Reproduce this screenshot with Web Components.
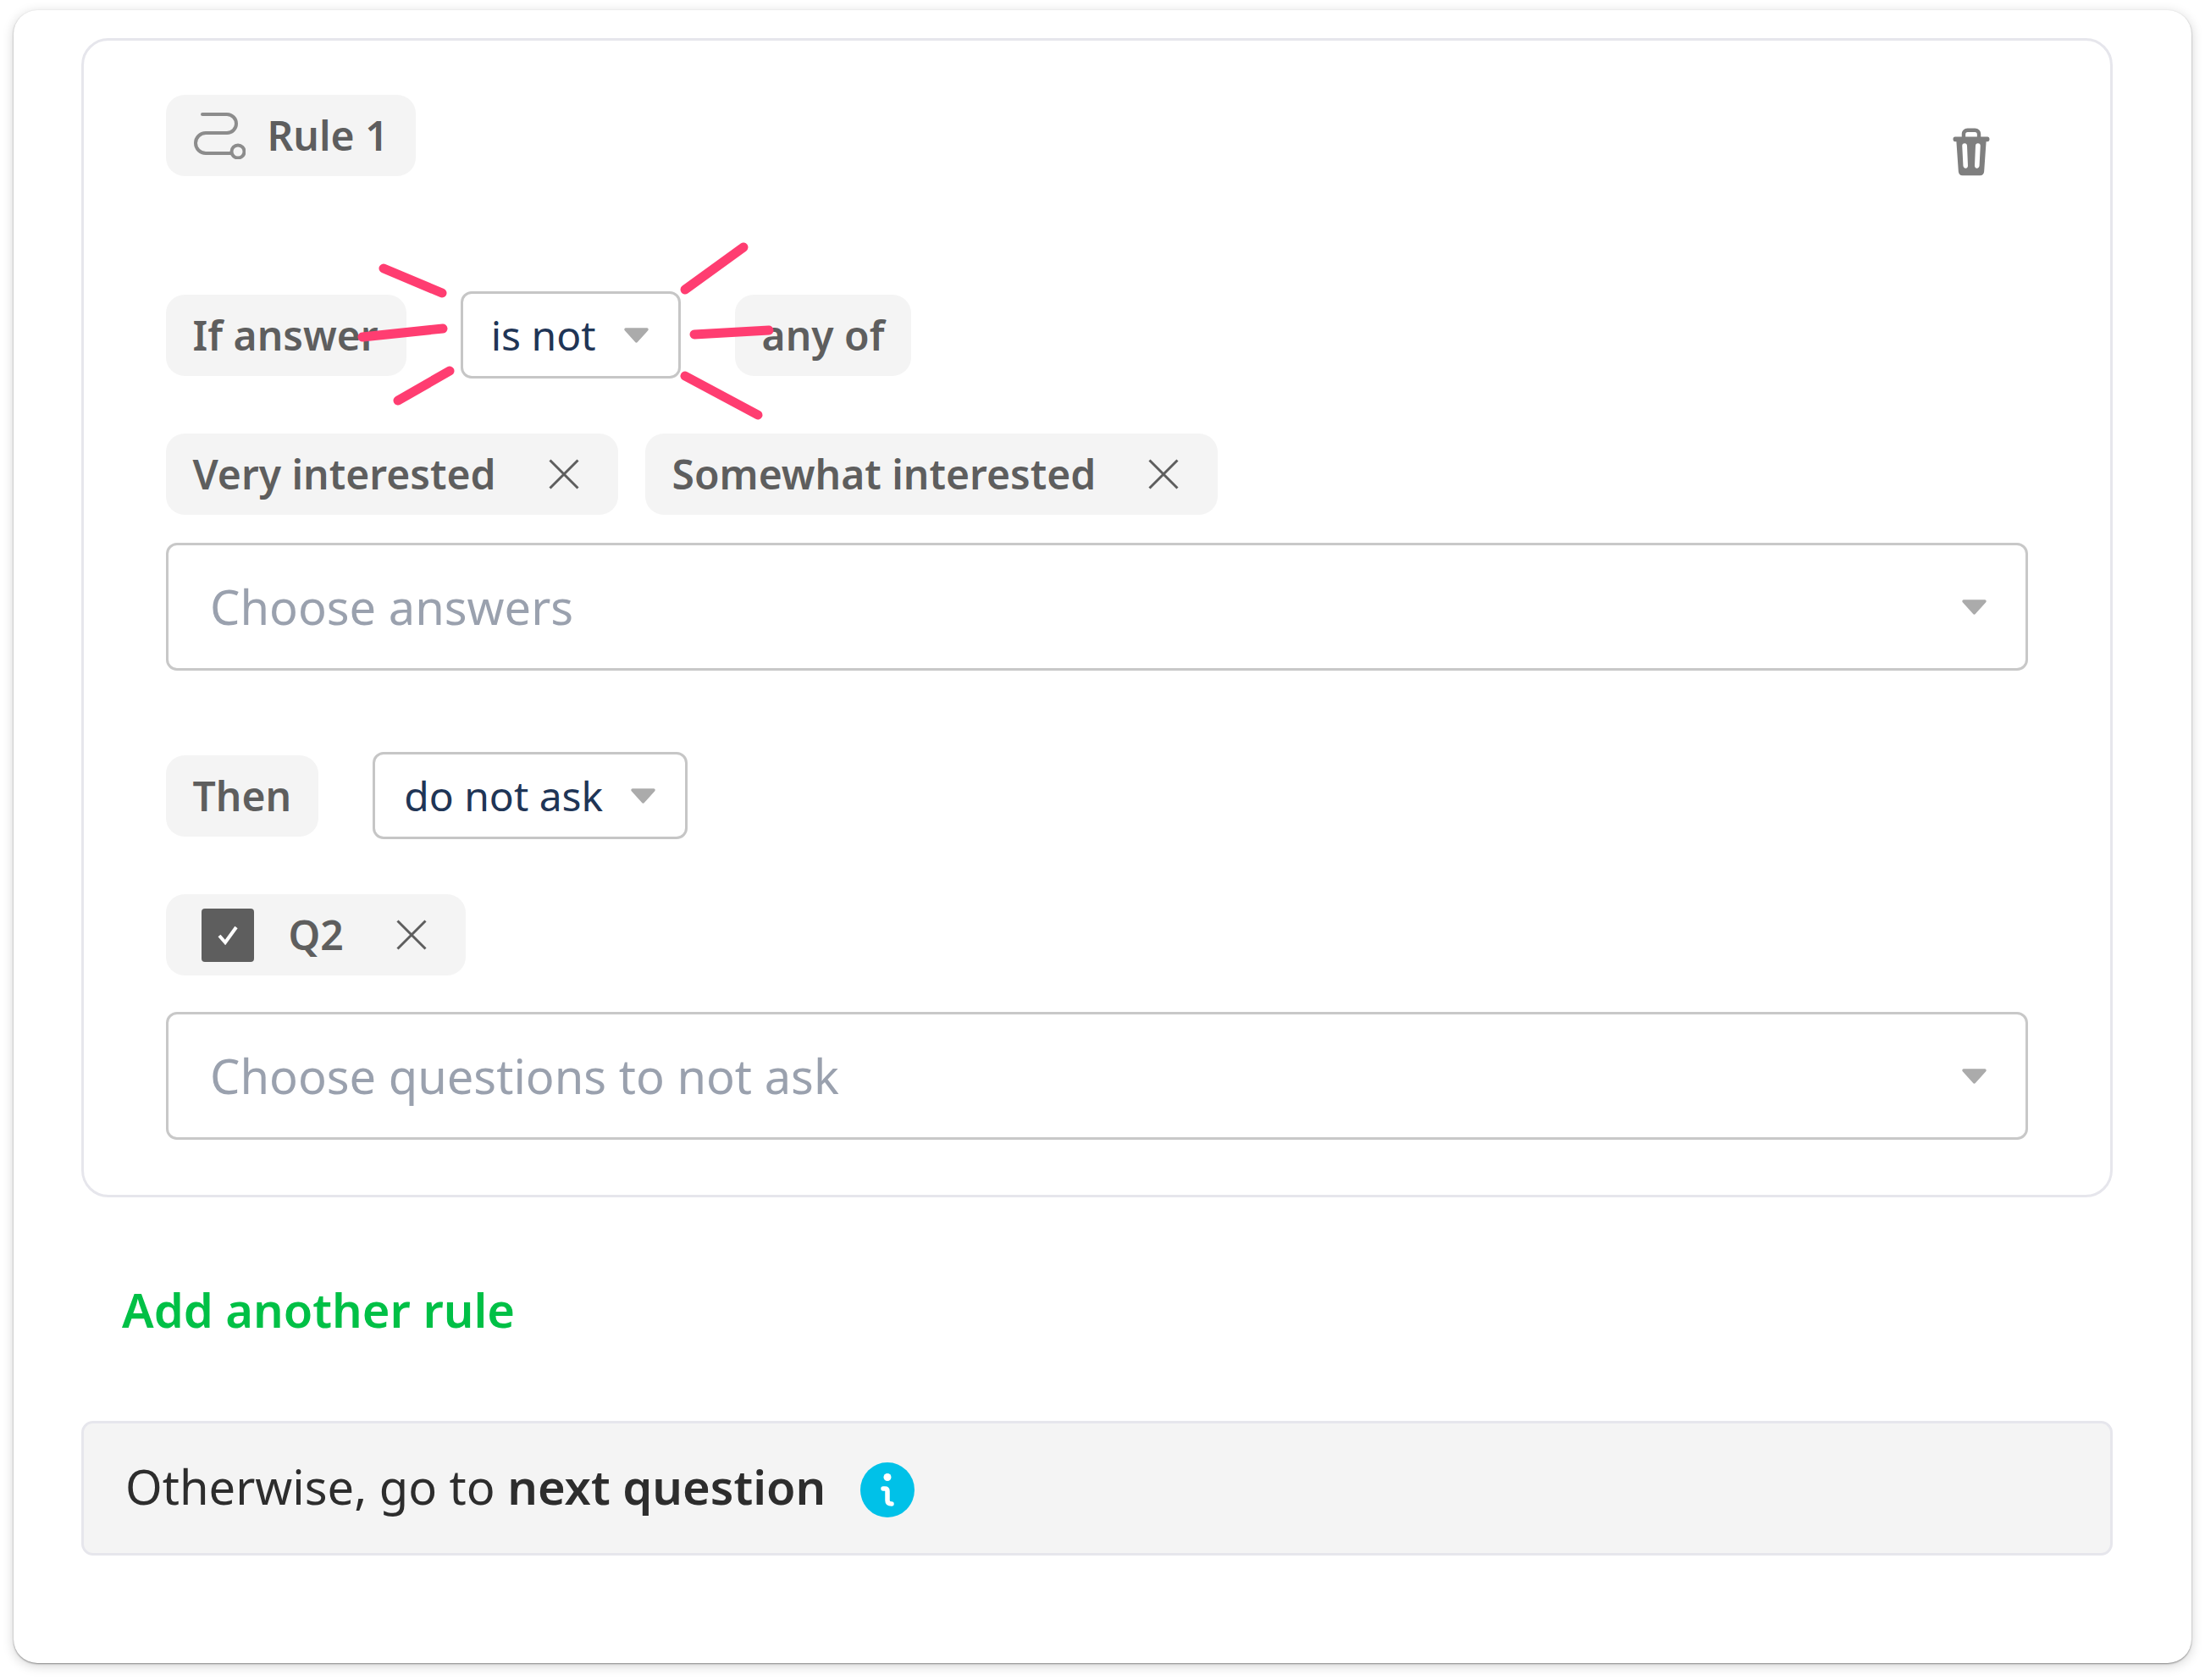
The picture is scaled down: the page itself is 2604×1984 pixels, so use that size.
<!DOCTYPE html>
<html><head><meta charset="utf-8">
<style>
html,body{margin:0;background:#fff}
body{font-family:"Noto Sans",sans-serif;width:2604px;height:1984px;overflow:hidden}
</style></head><body>
<template id="t-chip"><style>
:host{display:inline-flex;align-items:center;height:96px;box-sizing:border-box;padding:0 32px;background:#f4f4f4;border-radius:22px;color:#5e5e5e;font-weight:600;font-size:48px;line-height:1;white-space:nowrap}
.x{display:none;margin-left:62px;width:36px;height:36px}
:host([closable]){padding-right:46px}
:host([closable]) .x{display:block}
</style><slot></slot><svg class="x" viewBox="0 0 36 36"><path d="M1.5 1.5L34.5 34.5M34.5 1.5L1.5 34.5" stroke="#5e5e5e" stroke-width="3" fill="none"/></svg></template>

<template id="t-select"><style>
:host{display:inline-flex;align-items:center;height:103px;box-sizing:border-box;background:#fff;border:3.5px solid #c6c6c6;border-radius:13px;color:#1f3556;font-size:48px;line-height:1;white-space:nowrap;padding:0 var(--pr,32px) 0 var(--pl,32px)}
svg{margin-left:var(--ag,30px);width:31px;height:20px;display:block}
</style><slot></slot><svg viewBox="0 0 30 19"><path d="M3 1h24a1.800 1.800 0 0 1 1.300 3L16.500 17a2 2 0 0 1-3 0L1.700 4A1.800 1.800 0 0 1 3 1z" fill="#ababab"/></svg></template>

<template id="t-field"><style>
:host{display:flex;align-items:center;justify-content:space-between;height:151px;box-sizing:border-box;background:#fff;border:3.5px solid #c8c8c8;border-radius:13px;color:#9aa1ae;font-size:56px;line-height:1;padding:0 45px 0 49.5px}
span{position:relative;top:-1px}
svg{width:31px;height:20px;display:block}
</style><span><slot></slot></span><svg viewBox="0 0 30 19"><path d="M3 1h24a1.800 1.800 0 0 1 1.300 3L16.500 17a2 2 0 0 1-3 0L1.700 4A1.800 1.800 0 0 1 3 1z" fill="#ababab"/></svg></template>

<template id="t-shell"><style>
:host{display:block;box-sizing:border-box;width:2572px;height:1952px;margin:12px 16px 0;background:#fff;border-radius:28px;box-shadow:0 1px 2px rgba(0,0,0,.4),0 3px 14px rgba(0,0,0,.18);padding:33px 93px 0 80px}
</style><slot></slot></template>

<template id="t-rule"><style>
:host{display:block;position:relative;box-sizing:border-box;height:1369px;background:#fff;border:3.5px solid #e6e6ec;border-radius:32px;padding:64px 97px 0 96.5px}
.head{display:flex;justify-content:space-between;align-items:flex-start}
.trash{margin:38px 45px 0 0;width:44px;height:58px;display:block}
.cond{display:flex;align-items:center;margin-top:136px}
.cond x-select{margin:0 64px}
.tags{display:flex;gap:32px;margin-top:65px}
.f1{margin-top:33px}
.then{display:flex;align-items:center;gap:64px;margin-top:96px}
.q{display:flex;margin-top:65px}
.f2{margin-top:43px}
.rays{position:absolute;left:-99px;top:-48px;width:1100px;height:600px;pointer-events:none}
.ic{width:62px;height:56px;margin-right:26px;display:block;flex:none}
.box{width:62px;height:63px;margin-right:41px;background:#5e5e5e;border-radius:4px;display:flex;align-items:center;justify-content:center;flex:none}
</style>
<div class="head">
<x-chip><svg class="ic" viewBox="0 0 62 56"><path d="M11 3H40a11 11 0 0 1 0 22H15a12 12 0 0 0 0 24H44" fill="none" stroke="#8c8c8c" stroke-width="4" stroke-linecap="round"/><circle cx="53" cy="47" r="7.500" fill="none" stroke="#8c8c8c" stroke-width="4"/></svg>Rule 1</x-chip>
<svg class="trash" viewBox="0 0 45 58"><path fill="#7f7f7f" fill-rule="evenodd" d="M11 11V8c0-4 3-7 7-7h9c4 0 7 3 7 7v3h8c1.600 0 2.500 1 2.500 3S43.600 17 42 17h-1.500l-2.500 36c-.3 3-2 5-5 5H12c-3 0-4.700-2-5-5L4.500 17H3C1.400 17 .5 16 .5 14S1.400 11 3 11zM15.500 11h14V8c0-1.500-1-2.500-2.500-2.500h-9c-1.500 0-2.500 1-2.500 2.500zM14.500 19c-2 0-3 1.300-3 3l1.200 24c.1 2 1.300 3.200 3 3.200s2.800-1.200 2.700-3.200l-1-24c-.1-1.700-1-3-2.900-3zM30.500 19c2 0 3 1.300 3 3l-1.200 24c-.1 2-1.300 3.200-3 3.200s-2.800-1.200-2.700-3.200l1-24c.1-1.700 1-3 2.900-3z"/></svg>
</div>
<div class="cond">
<x-chip style="padding-right:33px">If answer</x-chip>
<x-select style="--pl:33px;--pr:34px;--ag:32px">is not</x-select>
<x-chip>any of</x-chip>
</div>
<div class="tags">
<x-chip closable>Very interested</x-chip>
<x-chip closable>Somewhat interested</x-chip>
</div>
<x-field class="f1">Choose answers</x-field>
<div class="then">
<x-chip>Then</x-chip>
<x-select style="--pl:34px;--pr:34px;--ag:32px">do not ask</x-select>
</div>
<div class="q">
<x-chip closable style="padding-left:42px"><span class="box"><svg width="26" height="24" viewBox="0 0 26 24"><path d="M3 13l7 8L23 3" fill="none" stroke="#fff" stroke-width="4"/></svg></span>Q2</x-chip>
</div>
<x-field class="f2">Choose questions to not ask</x-field>
<svg class="rays" viewBox="0 0 1100 600"><g fill="none" stroke="#ff3d71" stroke-width="11" stroke-linecap="round"><path d="M453 317L522 346"/><path d="M428 398L523 388"/><path d="M470 473L531 438"/><path d="M809 342L878 292"/><path d="M820 395L908 390"/><path d="M809 444L895 490"/></g></svg>
</template>

<template id="t-add"><style>
:host{display:block;color:#00c046;font-weight:600;font-size:56px;line-height:74px;margin:95px 0 0 48px}
</style><slot></slot></template>

<template id="t-other"><style>
:host{display:flex;align-items:center;box-sizing:border-box;height:159px;margin-top:95px;background:#f4f4f4;border:3.5px solid #e6e6ec;border-radius:14px;padding:0 0 0 49px;color:#2d2d2d;font-size:56px;line-height:1;white-space:nowrap}
::slotted(span){position:relative;top:-3px}
svg{margin-left:41px;width:64px;height:65px;display:block;position:relative;top:2px}
</style><slot></slot><svg viewBox="0 0 64 65"><ellipse cx="32" cy="32.500" rx="32" ry="32.500" fill="#00c1e8"/><circle cx="32" cy="17.500" r="4.500" fill="#fff"/><path d="M27 31h2q3 0 3 3v11q0 4 5 4" fill="none" stroke="#fff" stroke-width="5.500" stroke-linecap="round" stroke-linejoin="round"/></svg></template>

<x-shell>
<x-rule></x-rule>
<x-add>Add another rule</x-add>
<x-other><span>Otherwise, go to&nbsp;<b style="font-weight:600">next question</b></span></x-other>
</x-shell>
<script>
function reg(name,tid){customElements.define(name,class extends HTMLElement{constructor(){super();this.attachShadow({mode:"open"}).appendChild(document.getElementById(tid).content.cloneNode(true))}})}
reg("x-chip","t-chip");reg("x-select","t-select");reg("x-field","t-field");reg("x-shell","t-shell");reg("x-rule","t-rule");reg("x-add","t-add");reg("x-other","t-other");
</script>
</body></html>
